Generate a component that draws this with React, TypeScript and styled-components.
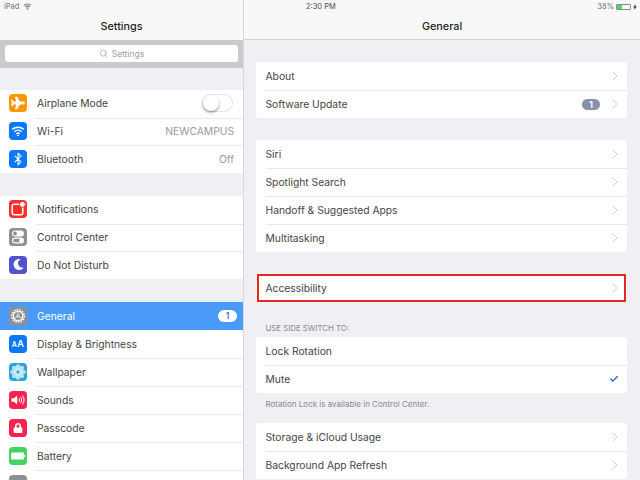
import React from 'react'
import styled, { createGlobalStyle } from 'styled-components'
import { Bluetooth, Check, ChevronRight, Search } from 'lucide-react'
import { FaLock, FaMoon, FaPlane } from 'react-icons/fa'

const GlobalStyle = createGlobalStyle`
  html, body {
    margin: 0;
    padding: 0;
    background: #efeff4;
    overflow: hidden;
  }
  * {
    box-sizing: border-box;
  }
`

const Wifi = ({ size = 12, color = '#fff' }: { size?: number; color?: string }) => (
  <svg width={size} height={size} viewBox="0 0 16 16" fill="none" stroke={color} strokeWidth="1.8" strokeLinecap="butt">
    <path d="M1.5 6.2a9.5 9.5 0 0 1 13 0" />
    <path d="M3.9 8.8a6 6 0 0 1 8.2 0" />
    <path d="M6.2 11.2a2.7 2.7 0 0 1 3.6 0" />
    <path d="M8 14.2l-1.2-1.4a1.7 1.7 0 0 1 2.4 0z" fill={color} stroke="none" />
  </svg>
)

const NotificationGlyph = () => (
  <svg width="18" height="18" viewBox="0 0 18 18" fill="none">
    <rect x="3.2" y="4.2" width="10.6" height="10.6" rx="2" stroke="#fff" strokeWidth="1.5" />
    <circle cx="13.4" cy="4.4" r="3" fill="#fff" stroke="#f5302a" strokeWidth="1" />
  </svg>
)

const ControlGlyph = () => (
  <svg width="18" height="18" viewBox="0 0 18 18">
    <rect x="3" y="2.5" width="12" height="6" rx="3" fill="#fff" />
    <circle cx="6" cy="5.5" r="1.9" fill="#8e8e93" />
    <rect x="3.6" y="10.1" width="10.8" height="4.8" rx="2.4" fill="none" stroke="#fff" strokeWidth="1.2" />
    <circle cx="12" cy="12.5" r="1.9" fill="#fff" />
  </svg>
)

const GearGlyph = () => (
  <svg width="18" height="18" viewBox="0 0 18 18" fill="none" stroke="#fff">
    <circle cx="9" cy="9" r="6.2" strokeWidth="1.6" strokeDasharray="1.6 1.1" />
    <circle cx="9" cy="9" r="4.7" strokeWidth="1.3" />
    <circle cx="9" cy="9" r="1.2" strokeWidth="0.8" />
    <path d="M9 7.8V4.6M8 9.6l-2.8 1.6M10 9.6l2.8 1.6" strokeWidth=".7" />
  </svg>
)

const FlowerGlyph = () => (
  <svg width="18" height="18" viewBox="0 0 18 18" fill="#d6f1fa">
    {[0, 45, 90, 135, 180, 225, 270, 315].map((a) => (
      <ellipse key={a} cx="9" cy="4.6" rx="2.2" ry="3.4" opacity=".82" transform={`rotate(${a} 9 9)`} />
    ))}
    <circle cx="9" cy="9" r="1.6" fill="#2ea3d9" />
  </svg>
)

const SoundGlyph = () => (
  <svg width="18" height="18" viewBox="0 0 18 18" fill="none" stroke="#fff" strokeWidth="1">
    <path d="M2.5 7.2h2.4L8.2 4.6v8.8L4.9 10.8H2.5z" fill="#fff" stroke="none" />
    <path d="M10 7.2a3 3 0 0 1 0 3.6M11.7 5.8a5.4 5.4 0 0 1 0 6.4M13.4 4.4a7.8 7.8 0 0 1 0 9.2" />
  </svg>
)

const BatteryGlyph = () => (
  <svg width="18" height="18" viewBox="0 0 18 18">
    <rect x="2" y="5.6" width="13" height="6.8" rx="1.2" fill="#fff" />
    <rect x="15.4" y="7.8" width="1" height="2.4" fill="#fff" />
  </svg>
)

const ChargeBolt = () => (
  <svg width="4" height="6" viewBox="0 0 4 6">
    <path d="M2.6 0L0 3.4h1.5L1.2 6 4 2.5H2.4z" fill="#444" />
  </svg>
)

const App = () => (
  <>
    <GlobalStyle />
    <Screen>
      <StatusBar>
        <StatusLeft>
          iPad <Wifi size={9} color="#777" />
        </StatusLeft>
        <StatusRight>
          <Clock>2:30 PM</Clock>
          <Power>
            38%
            <BatteryShell>
              <BatteryFill style={{ width: '38%' }} />
            </BatteryShell>
            <ChargeBolt />
          </Power>
        </StatusRight>
      </StatusBar>
      <Columns>
        <Sidebar>
          <NavBar>Settings</NavBar>
          <SearchBar>
            <SearchField>
              <Search size={9} strokeWidth={1.8} />
              Settings
            </SearchField>
          </SearchBar>
          <SideGroup $gap={22} $rowHeight={27.67}>
            <SideRow>
              <IconTile $bg="#ff9500"><FaPlane size={14} color="#fff" /></IconTile>
              <SideLabel>Airplane Mode</SideLabel>
              <Toggle><Knob /></Toggle>
            </SideRow>
            <SideRow>
              <IconTile $bg="#0a78fa"><Wifi size={14} /></IconTile>
              <SideLabel>Wi-Fi</SideLabel>
              <SideValue>NEWCAMPUS</SideValue>
            </SideRow>
            <SideRow>
              <IconTile $bg="#0a78fa"><Bluetooth size={14} color="#fff" strokeWidth={1.8} /></IconTile>
              <SideLabel>Bluetooth</SideLabel>
              <SideValue>Off</SideValue>
            </SideRow>
          </SideGroup>
          <SideGroup $gap={23} $rowHeight={27.67}>
            <SideRow>
              <IconTile $bg="#f5302a"><NotificationGlyph /></IconTile>
              <SideLabel>Notifications</SideLabel>
            </SideRow>
            <SideRow>
              <IconTile $bg="#8e8e93"><ControlGlyph /></IconTile>
              <SideLabel>Control Center</SideLabel>
            </SideRow>
            <SideRow>
              <IconTile $bg="#5253cf"><FaMoon size={11} color="#fff" /></IconTile>
              <SideLabel>Do Not Disturb</SideLabel>
            </SideRow>
          </SideGroup>
          <SideGroup $gap={23.1} $rowHeight={28}>
            <SideRow $active>
              <IconTile $bg="#8e8e93"><GearGlyph /></IconTile>
              <SideLabel $active>General</SideLabel>
              <SideBadge>1</SideBadge>
            </SideRow>
            <SideRow>
              <IconTile $bg="#0a78fa"><AaGlyph><small>A</small>A</AaGlyph></IconTile>
              <SideLabel>Display &amp; Brightness</SideLabel>
            </SideRow>
            <SideRow>
              <IconTile $bg="#2ea3d9"><FlowerGlyph /></IconTile>
              <SideLabel>Wallpaper</SideLabel>
            </SideRow>
            <SideRow>
              <IconTile $bg="#f9234f"><SoundGlyph /></IconTile>
              <SideLabel>Sounds</SideLabel>
            </SideRow>
            <SideRow>
              <IconTile $bg="#f9234f"><FaLock size={10} color="#fff" /></IconTile>
              <SideLabel>Passcode</SideLabel>
            </SideRow>
            <SideRow>
              <IconTile $bg="#45d363"><BatteryGlyph /></IconTile>
              <SideLabel>Battery</SideLabel>
            </SideRow>
            <SideRow>
              <IconTile $bg="#8e8e93" />
            </SideRow>
          </SideGroup>
        </Sidebar>
        <Main>
          <NavBar $ruled>General</NavBar>
          <Content>
            <Card>
              <CardRow>
                <CardLabel>About</CardLabel>
                <Chevron />
              </CardRow>
              <CardRow>
                <CardLabel>Software Update</CardLabel>
                <UpdateBadge>1</UpdateBadge>
                <Chevron />
              </CardRow>
            </Card>
            <Card $gap={22}>
              <CardRow>
                <CardLabel>Siri</CardLabel>
                <Chevron />
              </CardRow>
              <CardRow>
                <CardLabel>Spotlight Search</CardLabel>
                <Chevron />
              </CardRow>
              <CardRow>
                <CardLabel>Handoff &amp; Suggested Apps</CardLabel>
                <Chevron />
              </CardRow>
              <CardRow>
                <CardLabel>Multitasking</CardLabel>
                <Chevron />
              </CardRow>
            </Card>
            <Card $gap={22}>
              <CardRow>
                <CardLabel>Accessibility</CardLabel>
                <Chevron />
              </CardRow>
              <Highlight />
            </Card>
            <SectionTitle>USE SIDE SWITCH TO:</SectionTitle>
            <Card>
              <CardRow>
                <CardLabel>Lock Rotation</CardLabel>
              </CardRow>
              <CardRow>
                <CardLabel>Mute</CardLabel>
                <Tick size={10} strokeWidth={2.6} />
              </CardRow>
            </Card>
            <SectionNote>Rotation Lock is available in Control Center.</SectionNote>
            <Card $gap={10}>
              <CardRow>
                <CardLabel>Storage &amp; iCloud Usage</CardLabel>
                <Chevron />
              </CardRow>
              <CardRow>
                <CardLabel>Background App Refresh</CardLabel>
                <Chevron />
              </CardRow>
            </Card>
          </Content>
        </Main>
      </Columns>
    </Screen>
  </>
)

export default App

const Chevron = () => <ChevronIcon size={16} strokeWidth={1.1} />

const Screen = styled.div`
  width: 640px;
  height: 480px;
  overflow: hidden;
  background: #efeff4;
  font-family: Inter, "Liberation Sans", sans-serif;
  color: #444446;
`

const StatusBar = styled.div`
  display: flex;
  height: 13px;
  background: #f8f8f8;
  font-size: 7.5px;
  color: #6d6d70;
`

const StatusLeft = styled.div`
  display: flex;
  align-items: center;
  gap: 4px;
  width: 244px;
  padding: 0 0 0 4px;
  border-right: 1px solid #d8d8dc;
`

const StatusRight = styled.div`
  flex: 1;
  display: flex;
  align-items: center;
  justify-content: space-between;
  padding: 0 3px 0 62px;
`

const Clock = styled.span`
  color: #4a4a4c;
`

const Power = styled.span`
  display: flex;
  align-items: center;
  gap: 2px;
`

const BatteryShell = styled.span`
  display: block;
  width: 15px;
  height: 6px;
  border: 0.5px solid #8a8a8e;
  border-radius: 1px;
`

const BatteryFill = styled.span`
  display: block;
  height: 100%;
  background: #4cd964;
`

const Columns = styled.div`
  display: flex;
  height: 467px;
`

const Sidebar = styled.aside`
  width: 244px;
  flex: none;
  overflow: hidden;
  border-right: 1px solid #d8d8dc;
`

const Main = styled.main`
  flex: 1;
  min-width: 0;
`

const NavBar = styled.header<{ $ruled?: boolean }>`
  height: 27px;
  display: flex;
  align-items: center;
  justify-content: center;
  background: #f8f8f8;
  border-bottom: ${(p) => (p.$ruled ? '1px solid #d4d4d9' : 'none')};
  font-size: 10.8px;
  font-weight: 500;
  color: #1f1f20;
`

const SearchBar = styled.div`
  height: 28px;
  padding: 5px 5px 6px;
  background: #c9c9ce;
`

const SearchField = styled.div`
  height: 17px;
  display: flex;
  align-items: center;
  justify-content: center;
  gap: 4px;
  border-radius: 3px;
  background: #fff;
  font-size: 8.5px;
  color: #a0a0a5;
`

const SideGroup = styled.section<{ $gap: number; $rowHeight: number }>`
  margin-top: ${(p) => p.$gap}px;
  background: #fff;

  & > div {
    height: ${(p) => p.$rowHeight}px;
  }
`

const SideRow = styled.div<{ $active?: boolean }>`
  position: relative;
  display: flex;
  align-items: center;
  padding: 0 9px 1px;
  background: ${(p) => (p.$active ? '#4a9bf8' : 'transparent')};

  & + &::before {
    content: "";
    position: absolute;
    top: 0;
    left: 36px;
    right: 0;
    height: 1px;
    background: #e8e8ec;
  }
`

const IconTile = styled.span<{ $bg: string }>`
  width: 18px;
  height: 18px;
  flex: none;
  display: flex;
  align-items: center;
  justify-content: center;
  border-radius: 4px;
  background: ${(p) => p.$bg};
`

const AaGlyph = styled.span`
  font-size: 9px;
  font-weight: 600;
  color: #fff;
  letter-spacing: 0.5px;

  small {
    font-size: 7px;
  }
`

const SideLabel = styled.span<{ $active?: boolean }>`
  flex: 1;
  margin-left: 10px;
  font-size: 10.3px;
  color: ${(p) => (p.$active ? '#fff' : '#444446')};
`

const SideValue = styled.span`
  font-size: 10.3px;
  color: #98989c;
`

const Toggle = styled.span`
  width: 31px;
  height: 18px;
  margin-right: 1px;
  padding: 0.5px;
  border: 1px solid #e4e4e6;
  border-radius: 9px;
  background: #fff;
`

const Knob = styled.span`
  display: block;
  width: 16px;
  height: 16px;
  margin: -0.5px 0 0 -1px;
  border-radius: 50%;
  background: #fff;
  box-shadow: 0 1.5px 3px rgba(0, 0, 0, 0.4);
`

const SideBadge = styled.span`
  width: 19px;
  height: 12px;
  margin-right: -3px;
  display: flex;
  align-items: center;
  justify-content: center;
  border-radius: 6px;
  background: #fff;
  font-size: 8.5px;
  font-weight: 600;
  color: #3c6fb0;
`

const Content = styled.div`
  padding: 22px 13px 0 12px;
`

const Card = styled.section<{ $gap?: number }>`
  position: relative;
  margin-top: ${(p) => p.$gap ?? 0}px;
  border-radius: 3px;
  background: #fff;
`

const Highlight = styled.span`
  position: absolute;
  inset: 0 1px 0 1px;
  border: 2px solid #e8281e;
`

const CardRow = styled.div`
  position: relative;
  height: 28px;
  display: flex;
  align-items: center;
  gap: 7px;
  padding: 0 4px 0 9.5px;

  & + &::before {
    content: "";
    position: absolute;
    top: 0;
    left: 9.5px;
    right: 0;
    height: 1px;
    background: #e8e8ec;
  }
`

const CardLabel = styled.span`
  flex: 1;
  font-size: 10.3px;
  color: #444446;
`

const ChevronIcon = styled(ChevronRight)`
  color: #bdbdc2;
  flex: none;
`

const Tick = styled(Check)`
  margin-right: 4.5px;
  color: #0a5cc4;
  flex: none;
`

const UpdateBadge = styled.span`
  width: 18px;
  height: 11px;
  display: flex;
  align-items: center;
  justify-content: center;
  border-radius: 6px;
  background: #8791ab;
  font-size: 9.5px;
  font-weight: 600;
  color: #fff;
`

const SectionTitle = styled.h2`
  margin: 0;
  padding: 22px 9.5px 4px;
  font-size: 7.8px;
  line-height: 9px;
  font-weight: 400;
  color: #8a8a8f;
`

const SectionNote = styled.p`
  margin: 0;
  padding: 6px 9.5px 4px;
  font-size: 8px;
  line-height: 10px;
  color: #8a8a8f;
`
